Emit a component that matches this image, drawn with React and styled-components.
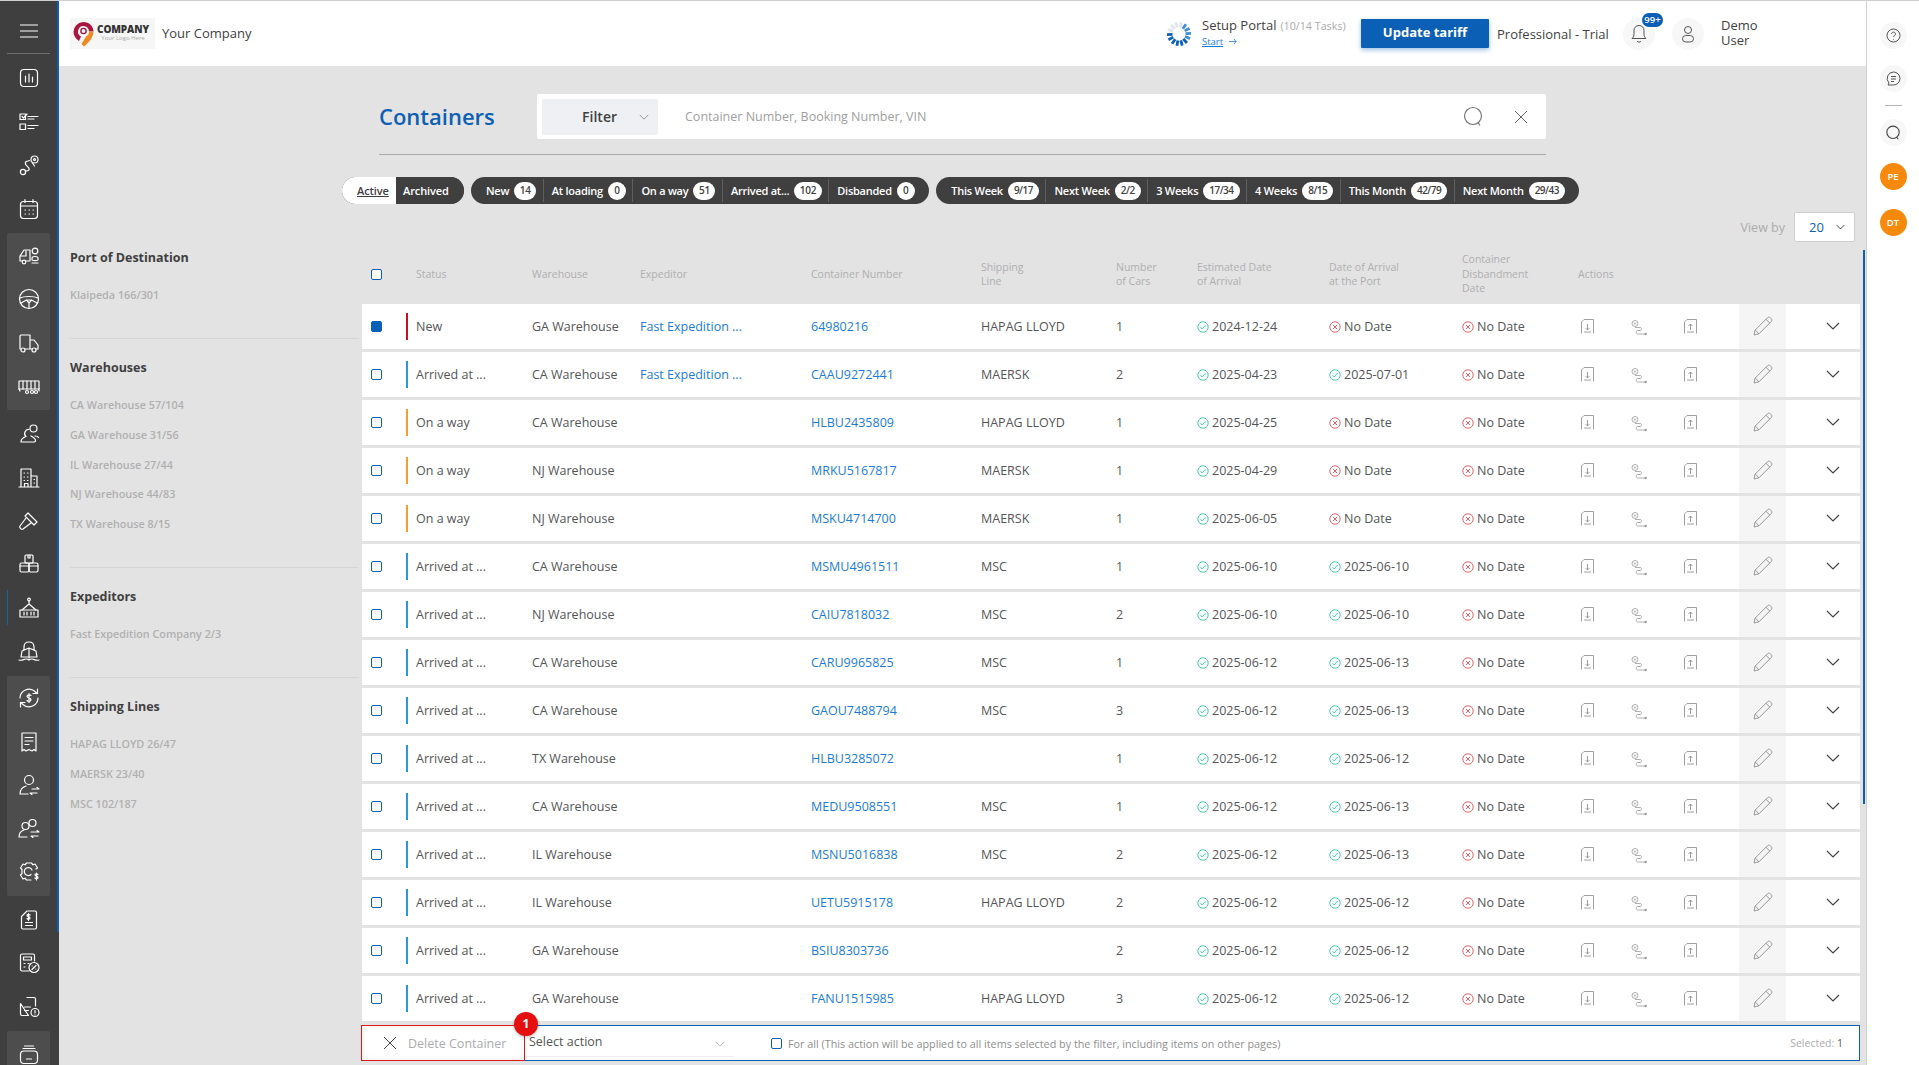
import React from "react";
import styled, { createGlobalStyle } from "styled-components";

const blue = "#0b5fb5";
const link = "#1a7cd6";

const GlobalStyle = createGlobalStyle`
  html, body {
    margin: 0;
    padding: 0;
    height: 100%;
    overflow: hidden;
    background: #e3e3e3;
    font-family: "Open Sans", "Noto Sans", sans-serif;
  }
  * { box-sizing: border-box; }
`;

const Page = styled.div`
  position: relative;
  display: flex;
  width: 1919px;
  height: 1065px;
  border-top: 1px solid #cfcfcf;
  overflow: hidden;
`;

/* left nav */
const Sidebar = styled.nav`
  position: relative;
  flex: 0 0 59px;
  display: flex;
  flex-direction: column;
  background: #3f3f3f;
  overflow: hidden;
`;

const SideThumb = styled.div`
  position: absolute;
  top: 0;
  right: 0;
  width: 2px;
  height: 931px;
  background: ${blue};
`;

const Burger = styled.div`
  flex: 0 0 53px;
  margin: 0 9px 0 7px;
  border-bottom: 1px solid #6e6e6e;
  display: flex;
  align-items: center;
  justify-content: center;
  padding-top: 7px;
`;

const SideSection = styled.div`
  flex: none;
  margin: 2.800px 9px 0 7px;
  border-radius: 2px;
  background: ${(p) => (p.$group ? "#4d4d4d" : "transparent")};
  padding: ${(p) => (p.$group ? "1px 0 2px" : "0")};
`;

const SideItem = styled.div`
  position: relative;
  height: 43.4px;
  display: flex;
  align-items: center;
  justify-content: center;
  ${(p) =>
    p.$active &&
    `&::before {
      content: "";
      position: absolute;
      left: 0;
      top: 4px;
      bottom: 4px;
      width: 1px;
      background: #1d5fa8;
    }`}
`;

const SideSvg = styled.svg`
  width: 24px;
  height: 24px;
  fill: none;
  stroke: #fff;
  stroke-width: 1.2;
  stroke-linecap: round;
  stroke-linejoin: round;
`;

const side = (children) => <SideSvg viewBox="0 0 24 24">{children}</SideSvg>;

const sideIcons = {
  chart: side(<><rect x="3.5" y="3.5" width="17" height="17" rx="3.5" /><path d="M8.5 10v6M12 8v8M15.5 11v5" /></>),
  tasks: side(<><rect x="3" y="4" width="5.5" height="5.5" /><path d="M5 6.5l1.5 1.5L10 4M11 6.5h10M11 9h6" /><rect x="3" y="14" width="5.5" height="5.5" /><path d="M11 15.5h10M11 18.500h6" /></>),
  route: side(<><circle cx="6" cy="19" r="2.600" /><circle cx="17.500" cy="6.500" r="3.500" /><circle cx="17.500" cy="6.500" r="1" /><path d="M8.500 18c4 0 5-2 2-4.500s-3-5 .5-5.500l1.500-.5M15.500 10l2 3" /></>),
  calendar: side(<><rect x="3.500" y="4.500" width="17" height="17" rx="3" /><path d="M3.500 9h17M8 2.500v3M16 2.500v3M8 13h.5M12 13h.5M16 13h.5M8 17h.5M12 17h.5M16 17h.5" /></>),
  truckUser: side(<><path d="M13 6H7l-4 6v5h2M9 17h4V6M3 12h6V7" /><circle cx="7" cy="18" r="1.800" /><circle cx="18" cy="7" r="2.800" /><path d="M15 14c0-2 6-2 6 0v1.500c0 1.500-6 1.500-6 0zM15 19h6" /></>),
  wheel: side(<><circle cx="12" cy="12" r="9.500" /><path d="M3 11c4-2 14-2 18 0M9.500 13h5L12 16zM12 16v5.500M9.500 13L4 16M14.500 13l5.500 3" /></>),
  truck: side(<><path d="M13 18H8M3.500 18H3V5a1 1 0 011-1h9v14M13 9h4l4 5v4h-2M13 18h2" /><circle cx="6" cy="19" r="2" /><circle cx="17" cy="19" r="2" /></>),
  trailer: side(<><rect x="2" y="7" width="20" height="8" /><path d="M6 7v8M10 7v8M14 7v8M18 7v8M2 15l1 2M22 15v2" /><circle cx="10" cy="18" r="1.500" /><circle cx="15" cy="18" r="1.500" /><circle cx="19" cy="18" r="1.500" /></>),
  people: side(<><circle cx="16.500" cy="6.500" r="3.500" /><path d="M12 7.500a4 4 0 00-3 7c-3 1-5 3-5 5.500h13c1.500 0 2-1.500 1-3-1-1.500-3-2.500-4-3M18 14c2 0 3 .5 3.500 1.500" /></>),
  building: side(<><path d="M4 21V3h10v18zM14 10h6v11h-6M2 21h20M7 7h.5M10.500 7h.5M7 11h.5M10.500 11h.5M7 14.500h.5M10.500 14.500h.5M7.500 21v-3.500h3.500V21M17 13.500h.5M17 17h.5" /></>),
  gavel: side(<><path d="M11 4l9 9-3 3-9-9zM9 9l-6 8c-1 1.500 1 4 3 3l8-6" /></>),
  boxes: side(<><rect x="8" y="3" width="8" height="8" rx="1" /><path d="M11 3v3h2V3" /><rect x="3" y="11" width="9" height="9" rx="1.500" /><rect x="12" y="11" width="9" height="9" rx="1.500" /><path d="M3 14h18" /></>),
  crane: side(<><circle cx="12" cy="3.500" r="1.300" /><path d="M12 5v3M12 8L5 14M12 8l7 6" /><rect x="3" y="14" width="18" height="7" /><path d="M7 16v3M10 16v3M14 16v3M17 16v3" /></>),
  ship: side(<><path d="M12 3c-3 0-5 2-5 5v3M12 3c3 0 5 2 5 5v3M5 12l7-3 7 3 1 6H4zM12 9v10M2 21c3 1 5-1 7-1s3 1 3 1 1-1 3-1 4 2 7 1" /></>),
  refresh: side(<><path d="M3 12a9 9 0 0115-6.500l2 2M21 12a9 9 0 01-15 6.500l-2-2" /><path d="M20.500 3v4.500H16M3.500 21v-4.500H8" /><path d="M14 9.500c-1-1-4-1-4 .8s4 1.400 4 3.400-3 1.800-4 .8M12 7.500v9" /></>),
  receipt: side(<><path d="M5 3h14v18l-2-1.500-2 1.500-3-1.500L9 21l-2-1.500L5 21zM8 7.500h8M8 11h8M8 14.500h4" /></>),
  userSwap: side(<><circle cx="12" cy="7" r="4.500" /><path d="M3 21c0-5 3-7 6-8M11 21H3M15 16h7l-2-1.500M20 20h-7l2 1.500" /></>),
  usersSwap: side(<><circle cx="15.500" cy="6" r="3.500" /><circle cx="8.500" cy="9" r="3.500" /><path d="M2 20c0-3 2-6 5-7M10 20H2M14 15h8l-2-1.500M21 19h-7l2 1.500" /></>),
  gearDollar: side(<><path d="M19 9l1.500-1L18 4l-2 .8L14.500 3h-5L8 4.800 6 4 3.500 8 5 9.500v4L3.500 15 6 19l2-.8L9.500 20H14" /><path d="M15 10a4 4 0 10-1 4.500" /><path d="M21 14.500c-1-.8-3-.8-3 .5s3 1 3 2.500-2 1.500-3 .5M19.500 13v7" /></>),
  fileDollar: side(<><path d="M10 3h8a1.500 1.500 0 011.500 1.500v15A1.500 1.500 0 0118 21H6a1.500 1.500 0 01-1.500-1.500V8.500zM8.500 14.500h7M8.500 17.500h7" /><path d="M13 7c-.8-.8-3-.8-3 .5s3 1 3 2.500-2 1.500-3 .5M11.500 5.500v7" /></>),
  calcPercent: side(<><path d="M12 20H5a1.500 1.500 0 01-1.500-1.500v-14A1.500 1.500 0 015 3h11a1.500 1.500 0 011.500 1.500V10" /><rect x="6.500" y="6" width="8" height="3" /><path d="M7 12.500h1M7 16h1M11 12.500h1" /><circle cx="17" cy="16.500" r="5" /><path d="M15 18.500l4-4M15.200 15h.1M18.800 18h.1" /></>),
  fileAlert: side(<><path d="M10 2.500h7a1.500 1.500 0 011.500 1.500v7M11.500 20.500H5A1.500 1.500 0 013.500 19V8.500zM7.500 12h6M7.500 15.500h4" /><circle cx="18" cy="17.500" r="4" /><path d="M18 15.500v2.500M18 19.800v.1" /></>),
  archive: side(<><path d="M6 6.500h12M7.500 4h9" /><rect x="3.500" y="9" width="17" height="12.500" rx="3.500" /><path d="M9.500 17h5" /></>),
};

/* header */
const Center = styled.div`
  flex: 1;
  min-width: 0;
  display: flex;
  flex-direction: column;
`;

const Header = styled.header`
  flex: 0 0 65px;
  display: flex;
  align-items: center;
  background: #fff;
  padding-left: 11px;
`;

const LogoBox = styled.div`
  width: 85px;
  height: 31px;
  display: flex;
  align-items: center;
  background: #f6f6f6;
  padding-left: 3px;
  gap: 3px;
`;

const LogoText = styled.div`
  display: flex;
  flex-direction: column;
  align-items: center;
  line-height: 9px;
  font-size: 10px;
  font-weight: 800;
  color: #333;
  letter-spacing: -0.1px;
  span {
    font-size: 6px;
    font-weight: 400;
    color: #aaa;
    letter-spacing: 0;
  }
`;

const CompanyName = styled.div`
  margin: -2px 0 0 7px;
  font-size: 13px;
  color: #3f3f3f;
`;

const HeaderRight = styled.div`
  margin-left: auto;
  display: flex;
  align-items: center;
`;

const SetupBlock = styled.div`
  width: 159px;
  margin: -4px 0 0 10px;
  color: #3f3f3f;
`;

const SetupTitle = styled.div`
  font-size: 13px;
  line-height: 18px;
  span {
    font-size: 10.700px;
    color: #aaa;
    margin-left: 4px;
  }
`;

const SetupLink = styled.div`
  display: flex;
  align-items: center;
  gap: 6px;
  margin-top: 1px;
  font-size: 9.500px;
  line-height: 12px;
  color: ${link};
  a {
    text-decoration: underline;
  }
`;

const TariffButton = styled.button`
  width: 128px;
  height: 29px;
  padding: 0 0 3px;
  border: 0;
  border-radius: 1px;
  background: ${blue};
  color: #fff;
  font-family: inherit;
  font-size: 13px;
  font-weight: 700;
  box-shadow: 0 2px 5px rgba(11, 95, 181, 0.4);
`;

const Plan = styled.div`
  width: 126px;
  margin-left: 8px;
  font-size: 13px;
  color: #3f3f3f;
  white-space: nowrap;
`;

const RoundIcon = styled.div`
  position: relative;
  flex: none;
  width: ${(p) => p.$size || 32}px;
  height: ${(p) => p.$size || 32}px;
  margin-left: ${(p) => p.$ml || 0}px;
  border-radius: 50%;
  background: #f7f7f7;
  display: flex;
  align-items: center;
  justify-content: center;
`;

const CountBadge = styled.span`
  position: absolute;
  top: -5px;
  right: -8px;
  width: 21px;
  height: 14px;
  border-radius: 7px;
  background: ${blue};
  color: #fff;
  font-size: 9.500px;
  font-weight: 600;
  line-height: 14px;
  text-align: center;
`;

const UserName = styled.div`
  width: 145px;
  margin: -1px 0 0 17px;
  font-size: 13px;
  line-height: 15px;
  color: #3f3f3f;
`;

/* right rail */
const Rail = styled.aside`
  flex: 0 0 53px;
  display: flex;
  flex-direction: column;
  align-items: center;
  padding-top: 21px;
  background: #fff;
  border-left: 1px solid #cfcfcf;
`;

const RailGap = styled.div`
  height: ${(p) => p.$h}px;
`;

const RailLine = styled.div`
  width: 17px;
  height: 1px;
  background: #b5b5b5;
  margin: 13px 0;
`;

const Avatar = styled.div`
  width: 27px;
  height: 27px;
  border-radius: 50%;
  background: #f78a0c;
  color: #fff;
  font-size: 9.500px;
  font-weight: 600;
  text-align: center;
  line-height: 27px;
`;

/* main */
const Main = styled.main`
  position: relative;
  flex: 1;
  min-height: 0;
  display: flex;
  flex-direction: column;
  background: #e3e3e3;
`;

const TableThumb = styled.div`
  position: absolute;
  top: 184px;
  right: 1.500px;
  width: 2px;
  height: 554px;
  background: ${blue};
`;

const TopBlock = styled.div`
  width: 1167px;
  margin: 28px 0 0 320px;
  padding-bottom: 15px;
  border-bottom: 1px solid #a8a8a8;
  display: flex;
  align-items: center;
`;

const Title = styled.h1`
  width: 158px;
  margin: -2px 0 0;
  font-size: 22px;
  font-weight: 600;
  color: ${blue};
`;

const SearchBar = styled.div`
  flex: 1;
  height: 45px;
  display: flex;
  align-items: center;
  background: #fff;
  border-radius: 2px;
  padding: 0 18px 0 5px;
`;

const FilterButton = styled.div`
  width: 116px;
  height: 36px;
  display: flex;
  align-items: center;
  justify-content: flex-end;
  gap: 22px;
  padding-right: 9px;
  border-radius: 2px;
  background: #eef0f3;
  font-size: 14px;
  font-weight: 600;
  color: #3f3f3f;
`;

const Placeholder = styled.div`
  flex: 1;
  margin-left: 27px;
  font-size: 12.500px;
  color: #a0a0a0;
`;

const IconGap = styled.span`
  width: 30px;
`;

const PillRow = styled.div`
  display: flex;
  gap: 7px;
  margin: 22px 0 0 283px;
`;

const Pill = styled.div`
  height: 27px;
  display: flex;
  align-items: center;
  border-radius: 14px;
  background: #3f3f3f;
  padding: 0 ${(p) => p.$pad ?? 8}px;
  overflow: hidden;
  &:first-child {
    padding: 0;
  }
`;

const Toggle = styled.div`
  height: 100%;
  display: flex;
  align-items: center;
  font-size: 11px;
  font-weight: 600;
  letter-spacing: -0.1px;
  width: ${(p) => p.$w}px;
  padding-left: ${(p) => p.$pl}px;
  color: ${(p) => (p.$on ? "#3f3f3f" : "#fff")};
  background: ${(p) => (p.$on ? "#fff" : "#3f3f3f")};
  text-decoration: ${(p) => (p.$on ? "underline" : "none")};
`;

const Segment = styled.div`
  height: 23px;
  display: flex;
  align-items: center;
  gap: 5px;
  padding: 0 6.500px 0 8px;
  color: #fff;
  font-size: 11px;
  font-weight: 600;
  letter-spacing: -0.25px;
  white-space: nowrap;
  border-right: 1px solid ${(p) => (p.$last ? "transparent" : "#5f5f5f")};
`;

const Count = styled.span`
  min-width: 18px;
  height: 18px;
  padding: 0 ${(p) => (p.$wide ? 6 : 5.5)}px;
  border-radius: 9px;
  background: #fff;
  color: #3f3f3f;
  font-size: 10px;
  font-weight: 600;
  line-height: 17px;
  text-align: center;
  letter-spacing: ${(p) => (p.$wide ? -0.5 : -0.2)}px;
`;

const Body = styled.div`
  flex: 1;
  min-height: 0;
  display: flex;
  margin-top: 8px;
`;

/* filter column */
const Filters = styled.div`
  flex: 0 0 303px;
  padding: 17px 0 0 11px;
`;

const FilterGroup = styled.section`
  width: 288px;
  padding: 20px 0 34px;
  border-bottom: ${(p) => (p.$last ? "0" : "1px solid #d6d6d6")};
`;

const FilterTitle = styled.h3`
  margin: 0 0 19px;
  font-size: 12.500px;
  line-height: 18px;
  font-weight: 700;
  color: #3f3f3f;
`;

const FilterList = styled.div`
  display: flex;
  flex-direction: column;
  gap: 11.750px;
`;

const FilterItem = styled.div`
  font-size: 10.800px;
  line-height: 18px;
  font-weight: 600;
  color: #b0b0b0;
`;

/* table */
const TableArea = styled.div`
  flex: 1;
  min-width: 0;
  display: flex;
  flex-direction: column;
  padding-right: 6px;
`;

const ViewByRow = styled.div`
  height: 30px;
  display: flex;
  align-items: center;
  justify-content: flex-end;
  gap: 9px;
  font-size: 12.500px;
  color: #acacac;
`;

const ViewBySelect = styled.div`
  width: 61px;
  height: 30px;
  margin-right: 5px;
  display: flex;
  align-items: center;
  justify-content: space-between;
  padding: 0 9px 0 14px;
  background: #fff;
  border: 1px solid #cfcfcf;
  border-radius: 2px;
  font-size: 13px;
  color: ${blue};
`;

const columns = "44px 126px 108px 171px 170px 135px 81px 132px 133px 116px 161px 47px 74px";

const HeadRow = styled.div`
  height: 62px;
  padding-top: 2px;
  display: grid;
  grid-template-columns: ${columns};
  align-items: center;
  font-size: 10.500px;
  line-height: 14.500px;
  color: #afafaf;
`;

const HeadCell = styled.div`
  padding-left: ${(p) => p.$pl || 0}px;
`;

const Rows = styled.div`
  display: flex;
  flex-direction: column;
  gap: 3px;
`;

const Row = styled.div`
  height: 45px;
  display: grid;
  grid-template-columns: ${columns};
  align-items: center;
  background: #fff;
  font-size: 12.500px;
  color: #555;
  white-space: nowrap;
`;

const Check = styled.span`
  display: block;
  flex: none;
  width: 11px;
  height: 11px;
  margin-left: ${(p) => p.$ml ?? 9}px;
  border: 1.500px solid ${blue};
  border-radius: 2px;
  background: ${(p) => (p.$on ? blue : "#fff")};
`;

const StatusCell = styled.div`
  display: flex;
  align-items: center;
  gap: 8px;
  &::before {
    content: "";
    width: 2px;
    height: 27px;
    background: ${(p) => p.$color};
  }
`;

const LinkCell = styled.a`
  color: ${link};
`;

const DateCell = styled.div`
  display: flex;
  align-items: center;
  gap: 3px;
`;

const ActionsCell = styled.div`
  display: flex;
  align-items: center;
  padding-left: 3px;
`;

const RouteSlot = styled.span`
  display: flex;
  margin: 3px 36px 0 37px;
`;

const EditCell = styled.div`
  height: 100%;
  display: flex;
  align-items: center;
  justify-content: center;
  padding-bottom: 2px;
  background: #f5f5f5;
`;

const ToggleCell = styled.div`
  display: flex;
  justify-content: center;
  padding: 0 0 1px 20px;
`;

/* bottom bar */
const ActionBar = styled.div`
  position: relative;
  height: 36px;
  margin-top: 4px;
  display: flex;
  align-items: center;
  background: #fff;
  border: 1px solid ${blue};
`;

const DeleteButton = styled.div`
  position: relative;
  width: 164px;
  height: 36px;
  margin-left: -2px;
  display: flex;
  align-items: center;
  gap: 11px;
  padding-left: 21px;
  border: 1px solid #e01818;
  background: #fff;
  box-shadow: inset 0 0 6px rgba(0, 0, 0, 0.08);
  font-size: 12.500px;
  color: #acacac;
`;

const RedDot = styled.span`
  position: absolute;
  top: -14px;
  right: -14px;
  width: 24px;
  height: 24px;
  border-radius: 50%;
  background: #e60f0f;
  color: #fff;
  font-size: 12px;
  font-weight: 700;
  text-align: center;
  line-height: 24px;
  box-shadow: 0 1px 3px rgba(0, 0, 0, 0.3);
`;

const ActionSelect = styled.div`
  width: 209px;
  height: 28px;
  display: flex;
  align-items: center;
  justify-content: space-between;
  padding: 0 9px 2px 4px;
  border-bottom: 1px solid #efefef;
  font-size: 12.500px;
  color: #555;
  svg {
    margin-top: 5px;
  }
`;

const ForAll = styled.div`
  display: flex;
  align-items: center;
  gap: 6px;
  margin-left: 37px;
  font-size: 10.800px;
  color: #8f8f8f;
`;

const Selected = styled.div`
  margin-left: auto;
  padding-right: 16px;
  font-size: 10.500px;
  color: #acacac;
  span {
    color: #555;
  }
`;

/* small drawings */
const Chevron = ({ w = 14, h = 8, color = "#444", sw = 1.2 }) => (
  <svg width={w} height={h} viewBox="0 0 14 8" fill="none" stroke={color} strokeWidth={sw}>
    <path d="M1 1l6 6 6-6" />
  </svg>
);

const Cross = ({ s = 14, color = "#555", sw = 1 }) => (
  <svg width={s} height={s} viewBox="0 0 14 14" fill="none" stroke={color} strokeWidth={sw}>
    <path d="M1 1l12 12M13 1L1 13" />
  </svg>
);

const SearchGlyph = ({ s = 22, color = "#777", sw = 1.2 }) => (
  <svg width={s} height={s} viewBox="0 0 22 22" fill="none" stroke={color} strokeWidth={sw}>
    <circle cx="11" cy="10" r="8.500" />
    <path d="M16 16.500l2 3" />
  </svg>
);

const DateOk = () => (
  <svg width="12" height="12" viewBox="0 0 12 12" fill="none" stroke="#2cc6a3" strokeWidth="0.9">
    <circle cx="6" cy="6" r="5.200" />
    <path d="M3.500 6.200l1.800 1.800 3.200-3.800" />
  </svg>
);

const DateNone = () => (
  <svg width="12" height="12" viewBox="0 0 12 12" fill="none" stroke="#ea4f58" strokeWidth="0.9">
    <circle cx="6" cy="6" r="5.200" />
    <path d="M4 4l4 4M8 4l-4 4" />
  </svg>
);

const DocDown = () => (
  <svg width="13" height="15" viewBox="0 0 13 15" fill="none" stroke="#888" strokeWidth="0.8">
    <path d="M.5 14.500V3L3 .5h9.500v14M3 13h7M6.500 5v6M4.500 9l2 2 2-2" />
  </svg>
);

const DocUp = () => (
  <svg width="13" height="15" viewBox="0 0 13 15" fill="none" stroke="#888" strokeWidth="0.8">
    <path d="M.5 14.500V3L3 .5h9.500v14M3 13h7M6.500 11V5M4.500 7l2-2 2 2" />
  </svg>
);

const RouteMini = () => (
  <svg width="17" height="16" viewBox="0 0 17 16" fill="none" stroke="#999" strokeWidth="0.8">
    <circle cx="4" cy="3.500" r="3" />
    <path d="M3 2.500l2 2M5 2.500l-2 2M4 7.500h5c2 0 2 3 0 3H6.500c-1.500 0-1.500 3.500 0 3.500H15" />
    <path d="M14 13l2 1-2 1z" fill="#999" />
  </svg>
);

const PencilIcon = () => (
  <svg width="20" height="20" viewBox="0 0 20 20" fill="none" stroke="#8f8f8f" strokeWidth="0.9">
    <path d="M1 19l1.200-5L14.500 1.700c.8-.8 2-.8 2.800 0l1 1c.8.8.8 2 0 2.800L6 17.800zM2.200 14L6 17.800M13 3.300l3.700 3.700" />
  </svg>
);

const Spinner = () => {
  const marks = Array.from({ length: 14 }, (_, i) => i);
  return (
    <svg width="26" height="26" viewBox="0 0 26 26" strokeWidth="2.800">
      {marks.map((i) => (
        <line
          key={i}
          x1="13"
          y1="1"
          x2="13"
          y2="6.500"
          stroke={i < 1 || i > 10 ? "#dfe6ee" : i < 5 ? "#3d8fd8" : "#0b5fb5"}
          transform={`rotate(${i * (360 / 14) + 10} 13 13)`}
        />
      ))}
    </svg>
  );
};

const Bell = () => (
  <svg width="16" height="20" viewBox="0 0 16 20" fill="none" stroke="#555" strokeWidth="1">
    <path d="M8 1.500c-3 0-5 2-5 5v4c0 2-1 3-2 4h14c-1-1-2-2-2-4v-4c0-3-2-5-5-5zM6 17c.5 1.500 3.500 1.500 4 0" />
  </svg>
);

const UserGlyph = () => (
  <svg width="14" height="18" viewBox="0 0 14 18" fill="none" stroke="#555" strokeWidth="1">
    <circle cx="7" cy="5" r="3.500" />
    <rect x="1.500" y="10.500" width="11" height="6.500" rx="3.200" />
  </svg>
);

const LogoPin = () => (
  <svg width="21" height="26" viewBox="0 0 21 26">
    <path d="M10.500 1a10 10 0 00-10 10c0 4 2.500 7 5.500 9l2-4.500A5.500 5.500 0 1116 10.500h4.500C20.500 5 16 1 10.500 1z" fill="#a9153f" />
    <path d="M20.500 10.500c0 6-4.500 11-9.500 15l-2.500-2.500 4.500-7.500a5.500 5.500 0 003-5z" fill="#f08a24" />
    <circle cx="10.500" cy="10" r="2.600" fill="none" stroke="#a9153f" strokeWidth="1.400" />
  </svg>
);

const HelpIcon = () => (
  <svg width="15" height="15" viewBox="0 0 15 15" fill="none" stroke="#555" strokeWidth="1">
    <circle cx="7.500" cy="7.500" r="6.500" />
    <path d="M5.500 6c0-2.500 4-2.500 4 0 0 1.500-2 1.500-2 3M7.500 11v.6" />
  </svg>
);

const ChatIcon = () => (
  <svg width="15" height="15" viewBox="0 0 15 15" fill="none" stroke="#555" strokeWidth="1">
    <path d="M7.500 1a6.500 6.500 0 016.500 6.500A6.500 6.500 0 017.500 14H2l1-2A6.500 6.500 0 017.500 1zM5 5.500h5M5 8h5M5 10.500h3" />
  </svg>
);

const destinations = ["Klaipeda 166/301"];
const warehouses = ["CA Warehouse 57/104", "GA Warehouse 31/56", "IL Warehouse 27/44", "NJ Warehouse 44/83", "TX Warehouse 8/15"];
const expeditors = ["Fast Expedition Company 2/3"];
const lines = ["HAPAG LLOYD 26/47", "MAERSK 23/40", "MSC 102/187"];

const statusPills = [["New", "14"], ["At loading", "0"], ["On a way", "51"], ["Arrived at...", "102"], ["Disbanded", "0"]];
const periodPills = [["This Week", "9/17"], ["Next Week", "2/2"], ["3 Weeks", "17/34"], ["4 Weeks", "8/15"], ["This Month", "42/79"], ["Next Month", "29/43"]];

const statusColor = { "New": "#c8101e", "Arrived at ...": "#2a9ad9", "On a way": "#f0a030" };
const fastExp = "Fast Expedition ...";

const containers = [
  ["New", "GA Warehouse", fastExp, "64980216", "HAPAG LLOYD", 1, "2024-12-24", null],
  ["Arrived at ...", "CA Warehouse", fastExp, "CAAU9272441", "MAERSK", 2, "2025-04-23", "2025-07-01"],
  ["On a way", "CA Warehouse", "", "HLBU2435809", "HAPAG LLOYD", 1, "2025-04-25", null],
  ["On a way", "NJ Warehouse", "", "MRKU5167817", "MAERSK", 1, "2025-04-29", null],
  ["On a way", "NJ Warehouse", "", "MSKU4714700", "MAERSK", 1, "2025-06-05", null],
  ["Arrived at ...", "CA Warehouse", "", "MSMU4961511", "MSC", 1, "2025-06-10", "2025-06-10"],
  ["Arrived at ...", "NJ Warehouse", "", "CAIU7818032", "MSC", 2, "2025-06-10", "2025-06-10"],
  ["Arrived at ...", "CA Warehouse", "", "CARU9965825", "MSC", 1, "2025-06-12", "2025-06-13"],
  ["Arrived at ...", "CA Warehouse", "", "GAOU7488794", "MSC", 3, "2025-06-12", "2025-06-13"],
  ["Arrived at ...", "TX Warehouse", "", "HLBU3285072", "", 1, "2025-06-12", "2025-06-12"],
  ["Arrived at ...", "CA Warehouse", "", "MEDU9508551", "MSC", 1, "2025-06-12", "2025-06-13"],
  ["Arrived at ...", "IL Warehouse", "", "MSNU5016838", "MSC", 2, "2025-06-12", "2025-06-13"],
  ["Arrived at ...", "IL Warehouse", "", "UETU5915178", "HAPAG LLOYD", 2, "2025-06-12", "2025-06-12"],
  ["Arrived at ...", "GA Warehouse", "", "BSIU8303736", "", 2, "2025-06-12", "2025-06-12"],
  ["Arrived at ...", "GA Warehouse", "", "FANU1515985", "HAPAG LLOYD", 3, "2025-06-12", "2025-06-12"],
];

const DateValue = ({ value }) => (
  <DateCell>
    {value ? <DateOk /> : <DateNone />}
    {value || "No Date"}
  </DateCell>
);

const sideSections = [
  [false, ["chart", "tasks", "route", "calendar"]],
  [true, ["truckUser", "wheel", "truck", "trailer"]],
  [false, ["people", "building", "gavel", "boxes", "crane", "ship"]],
  [true, ["refresh", "receipt", "userSwap", "usersSwap", "gearDollar"]],
  [false, ["fileDollar", "calcPercent", "fileAlert"]],
  [true, ["archive"]],
];

export default function App() {
  return (
    <Page>
      <GlobalStyle />
      <Sidebar>
        <Burger>
          <svg width="18" height="14" viewBox="0 0 18 14" stroke="#fff" strokeWidth="1.200">
            <path d="M0 1h18M0 7h18M0 13h18" />
          </svg>
        </Burger>
        {sideSections.map(([group, names]) => (
          <SideSection $group={group} key={names[0]}>
            {names.map((name) => (
              <SideItem key={name} $active={name === "crane"}>
                {sideIcons[name]}
              </SideItem>
            ))}
          </SideSection>
        ))}
        <SideThumb />
      </Sidebar>

      <Center>
        <Header>
          <LogoBox>
            <LogoPin />
            <LogoText>
              COMPANY
              <span>Your Logo Here</span>
            </LogoText>
          </LogoBox>
          <CompanyName>Your Company</CompanyName>
          <HeaderRight>
            <Spinner />
            <SetupBlock>
              <SetupTitle>
                Setup Portal<span>(10/14 Tasks)</span>
              </SetupTitle>
              <SetupLink>
                <a>Start</a>
                <svg width="8" height="7" viewBox="0 0 8 7" fill="none" stroke={link} strokeWidth="0.8">
                  <path d="M0 3.500h7M5 1l2 2.500L5 6" />
                </svg>
              </SetupLink>
            </SetupBlock>
            <TariffButton>Update tariff</TariffButton>
            <Plan>Professional - Trial</Plan>
            <RoundIcon>
              <Bell />
              <CountBadge>99+</CountBadge>
            </RoundIcon>
            <RoundIcon $ml={17}>
              <UserGlyph />
            </RoundIcon>
            <UserName>
              Demo
              <br />
              User
            </UserName>
          </HeaderRight>
        </Header>

        <Main>
          <TopBlock>
            <Title>Containers</Title>
            <SearchBar>
              <FilterButton>
                Filter
                <Chevron w={10} h={6} color="#888" />
              </FilterButton>
              <Placeholder>Container Number, Booking Number, VIN</Placeholder>
              <SearchGlyph />
              <IconGap />
              <Cross s={14} color="#666" />
            </SearchBar>
          </TopBlock>

          <PillRow>
            <Pill>
              <Toggle $on $w={54} $pl={15}>Active</Toggle>
              <Toggle $w={68} $pl={7}>Archived</Toggle>
            </Pill>
            <Pill $pad={7}>
              {statusPills.map(([label, n], i) => (
                <Segment key={label} $last={i === statusPills.length - 1}>
                  {label}
                  <Count>{n}</Count>
                </Segment>
              ))}
            </Pill>
            <Pill $pad={7}>
              {periodPills.map(([label, n], i) => (
                <Segment key={label} $last={i === periodPills.length - 1}>
                  {label}
                  <Count $wide>{n}</Count>
                </Segment>
              ))}
            </Pill>
          </PillRow>

          <Body>
            <Filters>
              <FilterGroup>
                <FilterTitle>Port of Destination</FilterTitle>
                <FilterList>
                  {destinations.map((d) => <FilterItem key={d}>{d}</FilterItem>)}
                </FilterList>
              </FilterGroup>
              <FilterGroup>
                <FilterTitle>Warehouses</FilterTitle>
                <FilterList>
                  {warehouses.map((d) => <FilterItem key={d}>{d}</FilterItem>)}
                </FilterList>
              </FilterGroup>
              <FilterGroup>
                <FilterTitle>Expeditors</FilterTitle>
                <FilterList>
                  {expeditors.map((d) => <FilterItem key={d}>{d}</FilterItem>)}
                </FilterList>
              </FilterGroup>
              <FilterGroup $last>
                <FilterTitle>Shipping Lines</FilterTitle>
                <FilterList>
                  {lines.map((d) => <FilterItem key={d}>{d}</FilterItem>)}
                </FilterList>
              </FilterGroup>
            </Filters>

            <TableArea>
              <ViewByRow>
                View by
                <ViewBySelect>
                  20
                  <Chevron w={9} h={6} color="#333" sw={1.4} />
                </ViewBySelect>
              </ViewByRow>

              <HeadRow>
                <Check />
                <HeadCell $pl={10}>Status</HeadCell>
                <HeadCell>Warehouse</HeadCell>
                <HeadCell>Expeditor</HeadCell>
                <HeadCell>Container Number</HeadCell>
                <HeadCell>Shipping<br />Line</HeadCell>
                <HeadCell>Number<br />of Cars</HeadCell>
                <HeadCell>Estimated Date<br />of Arrival</HeadCell>
                <HeadCell>Date of Arrival<br />at the Port</HeadCell>
                <HeadCell>Container<br />Disbandment<br />Date</HeadCell>
                <HeadCell>Actions</HeadCell>
              </HeadRow>

              <Rows>
                {containers.map(([status, warehouse, expeditor, number, line, cars, eta, arrival], i) => (
                  <Row key={number}>
                    <Check $on={i === 0} />
                    <StatusCell $color={statusColor[status]}>{status}</StatusCell>
                    <div>{warehouse}</div>
                    <LinkCell>{expeditor}</LinkCell>
                    <LinkCell>{number}</LinkCell>
                    <div>{line}</div>
                    <div>{cars}</div>
                    <DateValue value={eta} />
                    <DateValue value={arrival} />
                    <DateValue />
                    <ActionsCell>
                      <DocDown />
                      <RouteSlot><RouteMini /></RouteSlot>
                      <DocUp />
                    </ActionsCell>
                    <EditCell>
                      <PencilIcon />
                    </EditCell>
                    <ToggleCell>
                      <Chevron />
                    </ToggleCell>
                  </Row>
                ))}
              </Rows>

              <ActionBar>
                <DeleteButton>
                  <Cross s={14} color="#444" />
                  Delete Container
                  <RedDot>1</RedDot>
                </DeleteButton>
                <ActionSelect>
                  Select action
                  <Chevron w={10} h={6} color="#aaa" />
                </ActionSelect>
                <ForAll>
                  <Check $ml={0} />
                  For all (This action will be applied to all items selected by the filter, including items on other pages)
                </ForAll>
                <Selected>
                  Selected: <span>1</span>
                </Selected>
              </ActionBar>
            </TableArea>
          </Body>
          <TableThumb />
        </Main>
      </Center>

      <Rail>
        <RoundIcon $size={27}><HelpIcon /></RoundIcon>
        <RailGap $h={16} />
        <RoundIcon $size={27}><ChatIcon /></RoundIcon>
        <RailLine />
        <RoundIcon $size={27}><SearchGlyph s={16} color="#444" sw={1.5} /></RoundIcon>
        <RailGap $h={17} />
        <Avatar>PE</Avatar>
        <RailGap $h={19} />
        <Avatar>DT</Avatar>
      </Rail>
    </Page>
  );
}
